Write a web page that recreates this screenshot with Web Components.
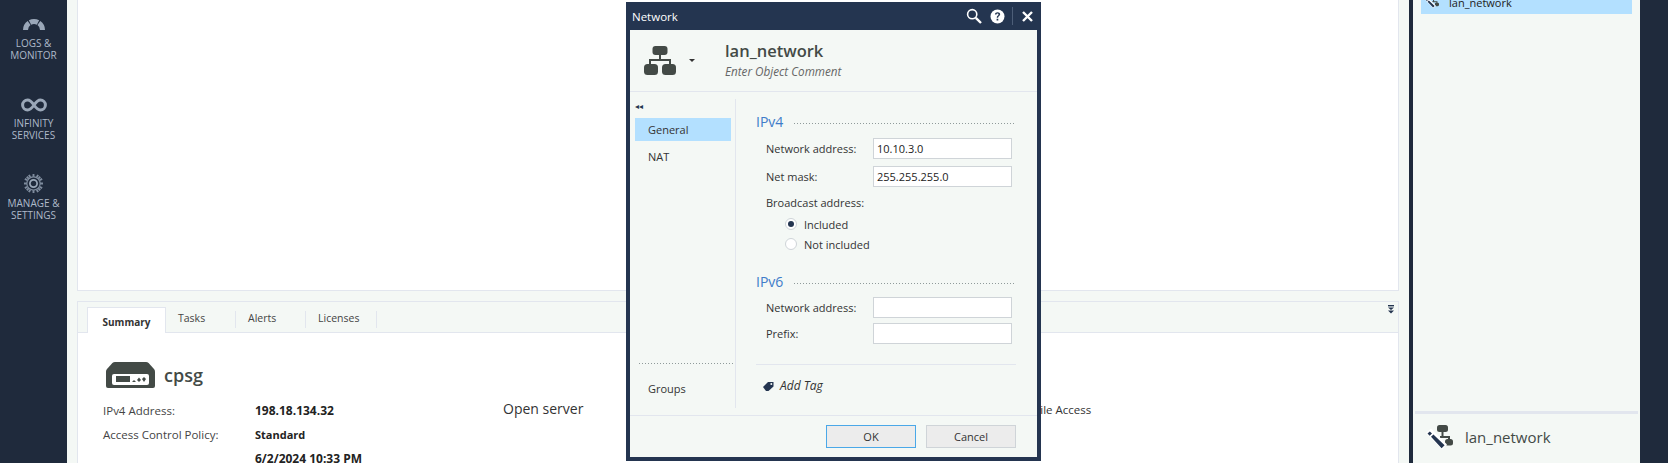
<!DOCTYPE html>
<html>
<head>
<meta charset="utf-8">
<title>Network</title>
<style>
  html, body { margin: 0; height: 463px; overflow: hidden; background: #f4f8f5; }
  body { display: flex; font-family: "Open Sans", "Noto Sans", sans-serif; font-size: 11px; color: #333; }
</style>
</head>
<body>
<app-sidebar>
  <side-item icon="gauge">LOGS &amp;<br>MONITOR</side-item>
  <side-item icon="infinity">INFINITY<br>SERVICES</side-item>
  <side-item icon="gear">MANAGE &amp;<br>SETTINGS</side-item>
</app-sidebar>
<main-area></main-area>
<object-panel name="lan_network"></object-panel>
<net-dialog name="lan_network"></net-dialog>

<script>
const ICONS = {
  gauge: `<svg width="22" height="12" viewBox="0 0 22 12" fill="none" stroke="#9aa7b8" stroke-width="5"><path d="M2.5 12A8.5 8.5 0 0 1 6.12 5.04"/><path d="M7.01 4.5A8.5 8.5 0 0 1 14.99 4.5"/><path d="M15.88 5.04A8.5 8.5 0 0 1 19.5 12"/></svg>`,
  infinity: `<svg width="26" height="14" viewBox="0 0 26 14"><path d="M13 7C10.5 3.4 8.8 2 6.6 2A5 5 0 0 0 6.6 12C8.8 12 10.5 10.6 13 7C15.5 3.4 17.2 2 19.4 2A5 5 0 0 1 19.4 12C17.2 12 15.5 10.6 13 7Z" fill="none" stroke="#9aa7b8" stroke-width="3"/></svg>`,
  gear: `<svg width="19" height="19" viewBox="0 0 20 20"><g stroke="#7f8c9e" stroke-width="2"><path d="M10 0V3.5M10 16.5V20M0 10H3.5M16.5 10H20M2.9 2.9L5.4 5.4M14.6 14.6L17.1 17.1M17.1 2.9L14.6 5.4M5.4 14.6L2.9 17.1M5.2 .9L6.6 3.6M13.4 16.4L14.8 19.1M14.8 .9L13.4 3.6M6.6 16.4L5.2 19.1M.9 5.2L3.6 6.6M16.4 13.4L19.1 14.8M19.1 5.2L16.4 6.6M3.6 13.4L.9 14.8"/></g><circle cx="10" cy="10" r="7" fill="#1f2a3c" stroke="#7f8c9e" stroke-width="1.2"/><circle cx="10" cy="10" r="3.8" fill="none" stroke="#9aa7b8" stroke-width="1.8"/></svg>`,
  network: `<svg width="32" height="29" viewBox="0 0 32 29" fill="#434a46"><rect x="8.5" y="0" width="15" height="9" rx="3"/><path d="M15 9H17V13H27V19H25V15H7V19H5V13H15Z"/><rect x="0" y="18" width="14" height="11" rx="3.5"/><rect x="18" y="18" width="14" height="11" rx="3.5"/></svg>`,
  netEdit: `<svg width="27" height="25" viewBox="0 0 27 25"><g fill="#434a46"><rect x="11" y="0" width="11" height="7" rx="2.5"/><path d="M15.5 7H17.5V11H24V15H22V13H14V11H15.5Z"/><rect x="19" y="14" width="8" height="6.5" rx="2.5"/></g><path d="M0 8L5 3.5L21 19.5L16 24.5Z" fill="#fff"/><path d="M1.5 8.6L3.8 6.4L6 8.4L3.7 10.8ZM5 11.8L7.4 9.4L18.6 20.2L15.6 23.2Z" fill="#243550"/></svg>`,
  device: `<svg width="49" height="26" viewBox="0 0 49 26"><path d="M9 0H40C41 0 42 .4 42.6 1L48 7C48.7 7.8 49 8.6 49 9.5V24A2 2 0 0 1 47 26H2A2 2 0 0 1 0 24V9.5C0 8.6 .3 7.8 1 7L6.4 1C7 .4 8 0 9 0Z" fill="#434a46"/><rect x="6" y="12" width="37" height="11" rx="2" fill="#fff"/><rect x="10" y="14" width="14" height="6" fill="#434a46"/><path d="M26 20L28 18L30 20ZM31 18L33 15.5L35 18L33 20ZM36 17L38 15L40 17L38 20Z" fill="#434a46"/></svg>`
};

class AppSidebar extends HTMLElement {
  constructor() {
    super();
    this.attachShadow({ mode: 'open' }).innerHTML = `
      <style>
        :host { display: flex; flex-direction: column; flex: 0 0 67px; height: 463px; background: #1f2a3c; padding-top: 18px; box-sizing: border-box; }
      </style>
      <slot></slot>`;
  }
}

class SideItem extends HTMLElement {
  constructor() {
    super();
    this.attachShadow({ mode: 'open' }).innerHTML = `
      <style>
        :host { display: block; height: 80px; text-align: center; color: #aeb9c9; font-size: 10px; line-height: 12px; }
        .ic { height: 19px; display: flex; align-items: flex-start; justify-content: center; }
        .ic.gear { height: 19px; margin-top: -4px; margin-bottom: 4px; }
        .lbl { display: block; }
      </style>
      <div class="ic ${this.getAttribute('icon')}">${ICONS[this.getAttribute('icon')]}</div>
      <span class="lbl"><slot></slot></span>`;
  }
}

class MainArea extends HTMLElement {
  constructor() {
    super();
    this.attachShadow({ mode: 'open' }).innerHTML = `
      <style>
        :host { display: flex; flex-direction: column; width: 1342px; box-sizing: border-box; padding: 0 10px 0 10px; height: 463px; overflow: hidden; }
        .canvas { flex: 0 0 291px; background: #fff; border: 1px solid #e2e6ee; border-top: 0; box-sizing: border-box; }
        .bottom { flex: 1; margin-top: 10px; border: 1px solid #e2e6ee; border-bottom: 0; display: flex; flex-direction: column; }
      </style>
      <div class="canvas"></div>
      <div class="bottom">
        <tab-bar></tab-bar>
        <summary-panel></summary-panel>
      </div>`;
  }
}

class TabBar extends HTMLElement {
  constructor() {
    super();
    this.attachShadow({ mode: 'open' }).innerHTML = `
      <style>
        :host { display: flex; align-items: flex-end; height: 31px; box-sizing: border-box; padding-left: 9px; border-bottom: 1px solid #e2e6ee; position: relative; font-size: 10.5px; }
        .tab { height: 17px; margin-bottom: 4px; border-right: 1px solid #e2e6ee; padding-left: 12px; box-sizing: border-box; line-height: 14px; color: #444; }
        .on { height: 26px; width: 79px; margin: 0 0 -1px; padding: 0; background: #fff; border: 1px solid #e2e6ee; border-bottom: 0; text-align: center; line-height: 28px; font-weight: 700; font-size: 10px; color: #333; }
        .more { position: absolute; right: 3px; top: 3px; }
      </style>
      <div class="tab on">Summary</div>
      <div class="tab" style="width:70px">Tasks</div>
      <div class="tab" style="width:70px">Alerts</div>
      <div class="tab" style="width:71px">Licenses</div>
      <svg class="more" width="8" height="9" viewBox="0 0 8 9" fill="#243550"><rect x="1" y="0" width="6" height="1.4"/><path d="M1 2.4H7L4 5ZM1 5.6H7L4 8.6Z"/></svg>`;
  }
}

class SummaryPanel extends HTMLElement {
  constructor() {
    super();
    this.attachShadow({ mode: 'open' }).innerHTML = `
      <style>
        :host { display: flex; flex: 1; background: #fff; padding: 28px 0 0 25px; box-sizing: border-box; font-size: 11.5px; }
        .left { width: 400px; }
        .head { display: flex; align-items: center; gap: 9px; margin-left: 3px; font-size: 18px; color: #434a46; height: 27px; font-weight: 600; }
        .rows { display: grid; grid-template-columns: 152px auto; grid-auto-rows: 24px; margin-top: 10px; align-items: center; color: #444; }
        b { color: #222; font-size: 12px; }
        b.std { font-size: 11px; }
        .srv { width: 513px; padding-top: 38px; font-size: 14px; color: #333; }
        .blade { padding-top: 41px; color: #333; font-size: 11.5px; }
      </style>
      <div class="left">
        <div class="head">${ICONS.device}<span>cpsg</span></div>
        <div class="rows">
          <span>IPv4 Address:</span><b>198.18.134.32</b>
          <span>Access Control Policy:</span><b class="std">Standard</b>
          <span></span><b>6/2/2024 10:33 PM</b>
        </div>
      </div>
      <div class="srv">Open server</div>
      <div class="blade">Mobile Access</div>`;
  }
}

class ObjectPanel extends HTMLElement {
  constructor() {
    super();
    const name = this.getAttribute('name');
    this.attachShadow({ mode: 'open' }).innerHTML = `
      <style>
        :host { display: flex; flex-direction: column; flex: 1; height: 463px; box-sizing: border-box; border-left: 4px solid #1f2a3c; border-right: 28px solid #1f2a3c; background: #f4f8f5; }
        .row { display: flex; align-items: center; gap: 10px; height: 24px; margin: -10px 8px 0 8px; padding-left: 4px; background: #b3e0ff; font-size: 11px; color: #222; }
        .row svg { width: 14px; height: 14px; }
        .spacer { flex: 1; }
        .sel { display: flex; align-items: center; gap: 12px; height: 46px; margin: 0 2px 1px 2px; padding: 0 0 2px 11px; border-top: 3px solid #e2e6ee; font-size: 15px; color: #434a46; }
      </style>
      <div class="row">${ICONS.netEdit}<span>${name}</span></div>
      <div class="spacer"></div>
      <div class="sel">${ICONS.netEdit}<span>${name}</span></div>`;
  }
}

class FormField extends HTMLElement {
  constructor() {
    super();
    this.attachShadow({ mode: 'open' }).innerHTML = `
      <style>
        :host { display: flex; align-items: center; height: 21px; padding-left: 10px; color: #333; }
        label { width: 107px; }
        .in { width: 139px; height: 21px; box-sizing: border-box; background: #fff; border: 1px solid #cfd4d8; padding-left: 3px; line-height: 19px; color: #222; }
      </style>
      <label>${this.getAttribute('label')}</label>
      <div class="in">${this.getAttribute('value') || ''}</div>`;
  }
}

class SectionHead extends HTMLElement {
  constructor() {
    super();
    this.attachShadow({ mode: 'open' }).innerHTML = `
      <style>
        :host { display: flex; align-items: center; gap: 11px; height: 20px; color: #3f7cc9; font-size: 14px; }
        i { flex: 0 0 222px; height: 1px; background: linear-gradient(to right, #8f9a9a 1px, transparent 1px) 0 0 / 3px 1px; margin-top: 5px; }
      </style>
      <span style="width:27px"><slot></slot></span><i></i>`;
  }
}

class RadioOption extends HTMLElement {
  constructor() {
    super();
    const on = this.hasAttribute('checked');
    this.attachShadow({ mode: 'open' }).innerHTML = `
      <style>
        :host { display: flex; align-items: center; gap: 7px; height: 20px; padding-left: 29px; color: #333; }
        .dot { width: 12px; height: 12px; box-sizing: border-box; border: 1px solid #cfd4d8; border-radius: 50%; background: #fff; display: flex; align-items: center; justify-content: center; }
        .dot b { width: 6px; height: 6px; border-radius: 50%; background: #243550; }
      </style>
      <span class="dot">${on ? '<b></b>' : ''}</span><slot></slot>`;
  }
}

class NetDialog extends HTMLElement {
  constructor() {
    super();
    this.attachShadow({ mode: 'open' }).innerHTML = `
      <style>
        :host { position: absolute; left: 626px; top: 2px; width: 415px; height: 459px; box-sizing: border-box; border: solid #243550; border-width: 0 4px 4px; background: #f4f8f5; display: flex; flex-direction: column; font-size: 11px; }
        .title { height: 28px; flex: none; margin: 0 -4px; padding: 0 4px 0 6px; background: #243550; color: #fff; display: flex; align-items: center; font-size: 11.5px; }
        .title span { flex: 1; }
        .title svg { display: block; }
        .sep { width: 1px; height: 18px; background: #4d5e78; margin: 0 9px 0 7px; }
        .head { height: 61px; flex: none; display: flex; align-items: center; border-bottom: 1px solid #e2e6ee; padding-left: 14px; }
        .head .caret { width: 0; height: 0; border: 3px solid transparent; border-top: 3px solid #333; border-bottom: 0; margin: 0 30px 0 13px; }
        .txt { padding-bottom: 2px; }
        .name { font-size: 16.5px; font-weight: 600; color: #434a46; line-height: 22px; }
        .cmt { font-style: italic; color: #666; line-height: 18px; font-size: 11.7px; }
        .mid { flex: 1; display: flex; padding-top: 7px; }
        nav { margin-left: 1px; border-right: 1px solid #e2e6ee; display: flex; flex-direction: column; flex: none; margin-bottom: 7px; padding: 0 0 4px 4px; width: 100px; }
        .back { height: 19px; margin-top: -1px; margin-bottom: 1px; font-size: 8px; line-height: 15px; color: #243550; }
        .item { height: 23px; line-height: 23px; padding-left: 13px; width: 96px; box-sizing: border-box; margin-bottom: 4px; }
        .item.on { background: #b3e0ff; }
        .grow { flex: 1; }
        .dots { width: 94px; height: 1px; margin-left: 4px; background: linear-gradient(to right, #8f9a9a 1px, transparent 1px) 0 0 / 3px 1px; margin-bottom: 13px; }
        .body { flex: 1; padding: 12px 21px 0 20px; display: flex; flex-direction: column; }
        .gap7 { margin-top: 7px; } .gap5 { margin-top: 5px; } .gap6 { margin-top: 6px; }
        .plain { padding-left: 10px; height: 20px; line-height: 20px; margin-top: 6px; margin-bottom: 1px; }
        .hr { border-top: 1px solid #e2e6ee; margin-top: 20px; width: 260px; }
        .tag { display: flex; align-items: center; gap: 6px; margin: 12px 0 0 7px; font-style: italic; color: #333; font-size: 12px; }
        .foot { height: 42px; box-sizing: border-box; flex: none; border-top: 1px solid #e2e6ee; display: flex; justify-content: flex-end; align-items: flex-start; gap: 10px; padding: 9px 21px 0 0; }
        .btn { width: 90px; height: 23px; box-sizing: border-box; border: 1px solid #cfd4d8; background: #ececec; text-align: center; line-height: 21px; color: #333; }
        .btn.ok { border-color: #4aa8e8; }
      </style>
      <div class="title">
        <span>Network</span>
        <svg width="16" height="16" viewBox="0 0 16 16" fill="none" stroke="#fff"><circle cx="6.2" cy="6.2" r="4.6" stroke-width="1.6"/><path d="M9.8 9.8L15 15" stroke-width="2.4"/></svg>
        <svg style="margin-left:8px" width="15" height="15" viewBox="0 0 15 15"><circle cx="7.5" cy="7.5" r="7" fill="#fff"/><path d="M4.9 5.6C5 3.9 6.2 3.2 7.6 3.2C9.1 3.2 10.2 4 10.2 5.3C10.2 7 8.1 7 8.1 8.8H6.7C6.7 6.4 8.5 6.5 8.5 5.4C8.5 4.8 8.1 4.5 7.5 4.5C6.9 4.5 6.5 4.9 6.5 5.6ZM6.6 9.8H8.3V11.5H6.6Z" fill="#243550"/></svg>
        <i class="sep"></i>
        <svg width="11" height="11" viewBox="0 0 11 11" stroke="#fff" stroke-width="2.4"><path d="M1 1L10 10M10 1L1 10"/></svg>
        <i style="width:4px"></i>
      </div>
      <div class="head">
        ${ICONS.network}
        <i class="caret"></i>
        <div class="txt"><div class="name">${this.getAttribute('name')}</div><div class="cmt">Enter Object Comment</div></div>
      </div>
      <div class="mid">
        <nav>
          <div class="back">◂◂</div>
          <div class="item on">General</div>
          <div class="item">NAT</div>
          <div class="grow"></div>
          <div class="dots"></div>
          <div class="item">Groups</div>
        </nav>
        <div class="body">
          <section-head>IPv4</section-head>
          <form-field class="gap7" label="Network address:" value="10.10.3.0"></form-field>
          <form-field class="gap7" label="Net mask:" value="255.255.255.0"></form-field>
          <div class="plain">Broadcast address:</div>
          <radio-option checked>Included</radio-option>
          <radio-option>Not included</radio-option>
          <section-head style="margin-top:17px">IPv6</section-head>
          <form-field class="gap6" label="Network address:"></form-field>
          <form-field class="gap5" label="Prefix:"></form-field>
          <div class="hr"></div>
          <div class="tag">
            <svg width="11" height="10" viewBox="0 0 11 10"><path d="M0 6L5 1H10.5V5.5L5.5 10H3Z" fill="#243550"/><circle cx="8.3" cy="3" r="1" fill="#f4f8f5"/></svg>
            Add Tag
          </div>
        </div>
      </div>
      <div class="foot"><div class="btn ok">OK</div><div class="btn">Cancel</div></div>`;
  }
}

customElements.define('side-item', SideItem);
customElements.define('app-sidebar', AppSidebar);
customElements.define('tab-bar', TabBar);
customElements.define('summary-panel', SummaryPanel);
customElements.define('main-area', MainArea);
customElements.define('object-panel', ObjectPanel);
customElements.define('form-field', FormField);
customElements.define('section-head', SectionHead);
customElements.define('radio-option', RadioOption);
customElements.define('net-dialog', NetDialog);
</script>
</body>
</html>
